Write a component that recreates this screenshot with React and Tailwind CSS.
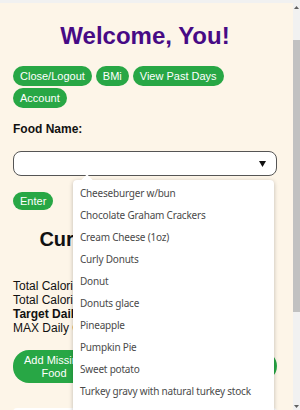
import React from "react";

const foods = [
  "Cheeseburger w/bun",
  "Chocolate Graham Crackers",
  "Cream Cheese (1oz)",
  "Curly Donuts",
  "Donut",
  "Donuts glace",
  "Pineapple",
  "Pumpkin Pie",
  "Sweet potato",
  "Turkey gravy with natural turkey stock",
];

const pill =
  "bg-[#28a745] text-white rounded-full text-[11px] leading-[13px] px-[7px] py-[3.5px]";

export default function App() {
  return (
    <div
      className="relative w-[300px] h-[410px] overflow-hidden bg-[#f1f1f1] flex flex-col"
      style={{ fontFamily: '"Liberation Sans", Arial, sans-serif' }}
    >
      <div className="h-[3px] shrink-0" />
      <div className="flex flex-1 min-h-0">
        <div className="flex-1 bg-[#fdf5e8] pl-[13px] pr-[16px] pt-[19px] text-[#111]">
          <h1 className="text-center text-[24px] leading-[28px] font-bold text-[#470a85]">
            Welcome, You!
          </h1>
          <div className="mt-[16px] flex flex-wrap gap-x-[4px] gap-y-[2px]">
            <button className={pill}>Close/Logout</button>
            <button className={pill}>BMi</button>
            <button className={pill}>View Past Days</button>
            <button className={pill}>Account</button>
          </div>
          <div className="mt-[14px] text-[12px] leading-[14px] font-bold">Food Name:</div>
          <div className="mt-[15px] h-[25px] bg-white border-[1.5px] border-[#555] rounded-[8px] flex items-center justify-end pr-[10px]">
            <svg width="7" height="6" viewBox="0 0 7 6">
              <path d="M0 0h7L3.5 6z" fill="#111" />
            </svg>
          </div>
          <button className="mt-[16px] bg-[#28a745] text-white rounded-full text-[11px] leading-[12px] px-[7px] py-[3px]">
            Enter
          </button>
          <h2 className="mt-[15px] text-center text-[20px] leading-[24px] font-bold">
            Current Day Summary
          </h2>
          <div className="mt-[28px] text-[12px] leading-[14px]">
            <div>Total Calories Consumed: 0</div>
            <div>Total Calories Burned: 0</div>
            <div className="font-bold">Target Daily Calories: 2000</div>
            <div>MAX Daily Calories: 2500</div>
          </div>
          <div className="mt-[15px] flex justify-between items-start">
            <button className="w-[82px] h-[33px] bg-[#28a745] text-white rounded-[16px] text-[11px] leading-[13px] px-[8px]">
              Add Missing Food
            </button>
            <button className="mt-[1px] w-[82px] h-[30px] bg-[#28a745] text-white rounded-[15px] text-[11px] leading-[13px] px-[8px]">
              Add Exercise
            </button>
          </div>
          <div className="mt-[25px] h-[40px] bg-white rounded-[4px]" />
        </div>
        <div className="w-[7px] shrink-0 bg-[#f1f1f1] flex flex-col items-center">
          <div className="h-[9px] flex items-center">
            <svg width="5" height="3" viewBox="0 0 5 3">
              <path d="M0 3h5L2.5 0z" fill="#606060" />
            </svg>
          </div>
          <div className="mt-[28px] w-full h-[272px] bg-[#c1c1c1]" />
          <div className="flex-1" />
          <div className="h-[7px] flex items-center">
            <svg width="5" height="3" viewBox="0 0 5 3">
              <path d="M0 0h5L2.5 3z" fill="#606060" />
            </svg>
          </div>
        </div>
      </div>

      <div className="absolute left-[73px] top-[180px] w-[201px] h-[240px] bg-white rounded-[4px] shadow-[0_1px_4px_rgba(0,0,0,0.25)] pt-[2px]">
        <div className="absolute -top-[4px] left-[10px] w-[8px] h-[8px] bg-white rotate-45" />
        {foods.map((f) => (
          <div
            key={f}
            className="relative h-[22px] flex items-center pl-[7px] text-[10px] tracking-[-0.2px] text-[#4a4a4a] whitespace-nowrap"
            style={{ fontFamily: '"Noto Sans", "DejaVu Sans", sans-serif' }}
          >
            {f}
          </div>
        ))}
      </div>
    </div>
  );
}
